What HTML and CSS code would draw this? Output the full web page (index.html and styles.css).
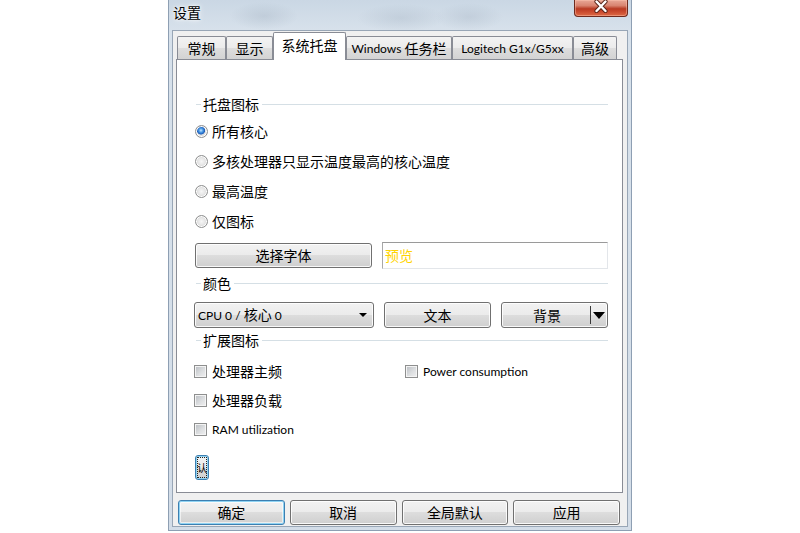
FILE: index.html
```html
<!DOCTYPE html>
<html lang="zh-CN">
<head>
<meta charset="utf-8">
<title>设置</title>
<link rel="stylesheet" href="styles.css">
</head>
<body>
<div class="stage">
  <div class="window">
    <div class="titlebar">
      <span class="title">设置</span>
      <div class="close" aria-label="关闭">
        <svg width="14" height="13" viewBox="0 0 14 13">
          <path d="M2.5 1.5 L11.5 11 M11.5 1.5 L2.5 11" stroke="#5a2418" stroke-width="4.2" stroke-linecap="round" fill="none"/>
          <path d="M2.5 1.5 L11.5 11 M11.5 1.5 L2.5 11" stroke="#ffffff" stroke-width="2.4" stroke-linecap="round" fill="none"/>
        </svg>
      </div>
    </div>
    <div class="client">
      <div class="tabs">
        <div class="tab t1">常规</div>
        <div class="tab t2">显示</div>
        <div class="tab t3 selected">系统托盘</div>
        <div class="tab t4"><span class="en">Windows</span>&nbsp;任务栏</div>
        <div class="tab t5"><span class="en">Logitech G1x/G5xx</span></div>
        <div class="tab t6">高级</div>
      </div>
      <div class="page">
        <div class="group-head"><span>托盘图标</span></div>
        <div class="radios">
          <div class="radio-row"><span class="radio checked"></span>所有核心</div>
          <div class="radio-row"><span class="radio"></span>多核处理器只显示温度最高的核心温度</div>
          <div class="radio-row"><span class="radio"></span>最高温度</div>
          <div class="radio-row"><span class="radio"></span>仅图标</div>
        </div>
        <div class="font-row">
          <div class="btn font-btn">选择字体</div>
          <div class="preview">预览</div>
        </div>
        <div class="group-head color-head"><span>颜色</span></div>
        <div class="color-row">
          <div class="btn combo"><span><span class="en">CPU 0 /</span> 核心 <span class="en">0</span></span><span class="combo-arrow"></span></div>
          <div class="btn text-btn">文本</div>
          <div class="btn split-btn"><span class="split-label">背景</span><span class="split-arrow"></span></div>
        </div>
        <div class="group-head ext-head"><span>扩展图标</span></div>
        <div class="checks">
          <div class="check-row"><span class="check"></span>处理器主频</div>
          <div class="check-row"><span class="check"></span><span class="en">Power consumption</span></div>
          <div class="check-row"><span class="check"></span>处理器负载</div>
          <div></div>
          <div class="check-row"><span class="check"></span><span class="en">RAM utilization</span></div>
        </div>
        <div class="tiny-btn"><span class="tiny-focus">认</span></div>
      </div>
      <div class="buttons">
        <div class="btn default">确定</div>
        <div class="btn">取消</div>
        <div class="btn">全局默认</div>
        <div class="btn">应用</div>
      </div>
    </div>
  </div>
</div>
</body>
</html>
```

FILE: styles.css
```css
* { box-sizing: border-box; }

html, body {
  margin: 0;
  padding: 0;
  background: #ffffff;
}

body {
  font-family: "Noto Sans CJK SC", "Noto Sans", sans-serif;
  font-size: 14px;
  line-height: 17px;
  color: #000;
}

.en {
  font-family: "Lato", "Noto Sans", sans-serif;
  font-size: 12px;
}

.stage {
  width: 800px;
  height: 533px;
  overflow: hidden;
}

.window {
  width: 464px;
  height: 531px;
  margin-left: 168px;
  background:
    radial-gradient(ellipse 34px 14px at 95px 16px, rgba(150,165,182,.28), transparent),
    radial-gradient(ellipse 44px 14px at 232px 18px, rgba(150,165,182,.25), transparent),
    radial-gradient(ellipse 34px 14px at 300px 17px, rgba(150,165,182,.25), transparent),
    linear-gradient(180deg, #cad7e4 0%, #d7e1eb 30px, #d3dde8 100%);
  border: 1px solid #8e9fb3;
  border-top: none;
  padding: 0 3px 3px 3px;
  display: flex;
  flex-direction: column;
}

.titlebar {
  height: 30px;
  display: flex;
  justify-content: space-between;
  align-items: flex-start;
}

.title {
  padding: 4px 0 0 1px;
  font-size: 14px;
  text-shadow: 0 0 6px #ffffff, 0 0 3px #ffffff;
}

.close {
  width: 54px;
  height: 17px;
  border: 1px solid #6e2a1e;
  border-top: none;
  border-radius: 0 0 4px 4px;
  background: linear-gradient(180deg, #e8a796 0%, #d98470 35%, #b83a22 55%, #c8472c 70%, #dd6a45 100%);
  box-shadow: inset 0 0 0 1px rgba(255,200,180,.45);
  display: flex;
  align-items: flex-start;
  justify-content: center;
}

.client {
  flex: 1;
  background: #f0f0f0;
  border: 1px solid #98a6b6;
  padding: 1px 4px 0 3px;
  display: flex;
  flex-direction: column;
}

.tabs {
  height: 27px;
  display: flex;
  align-items: flex-end;
  padding-left: 1px;
}

.tab {
  height: 23px;
  border: 1px solid #898c95;
  border-bottom: none;
  border-radius: 2px 2px 0 0;
  background: linear-gradient(180deg, #f3f3f3 0%, #ebebeb 50%, #dedede 50%, #d3d3d3 100%);
  display: flex;
  align-items: center;
  justify-content: center;
  white-space: nowrap;
}

.t1 { width: 49px; }
.t2 { width: 47px; }
.t3 { width: 73px; }
.t4 { width: 106px; }
.t5 { width: 121px; }
.t6 { width: 44px; }

.tab.selected {
  height: 28px;
  margin-bottom: -1px;
  background: #ffffff;
  position: relative;
  z-index: 1;
  padding-bottom: 2px;
}

.page {
  height: 434px;
  border: 1px solid #898c95;
  background: #ffffff;
  padding: 36px 14px 0 18px;
}

.group-head {
  display: flex;
  align-items: center;
  height: 17px;
  margin-left: 1px;
}

.group-head::before {
  content: "";
  width: 5px;
  height: 1px;
  background: #d5dfe5;
  margin-right: 2px;
}

.group-head::after {
  content: "";
  flex: 1;
  height: 1px;
  background: #d5dfe5;
  margin-left: 3px;
}

.radios {
  margin-top: 3px;
}

.radio-row {
  height: 30px;
  display: flex;
  align-items: center;
  gap: 4px;
}

.radio {
  width: 13px;
  height: 13px;
  border-radius: 50%;
  border: 1px solid #8e8f8f;
  background: radial-gradient(circle, #f6f6f6 0%, #e6e6e6 45%, #cfcfcf 70%, #f4f4f4 100%);
  box-shadow: inset 0 0 0 1px #ffffff;
}

.radio.checked {
  background: radial-gradient(circle at 45% 40%, #c6e6ff 0%, #4b9be6 22%, #1d5cb8 42%, #e2e2e2 50%, #d2d2d2 72%, #f4f4f4 100%);
}

.font-row {
  margin-top: 6px;
  height: 27px;
  display: flex;
  align-items: center;
  gap: 10px;
}

.btn {
  height: 25px;
  border: 1px solid #707070;
  border-radius: 3px;
  background: linear-gradient(180deg, #f2f2f2 0%, #ebebeb 50%, #dddddd 50%, #cfcfcf 100%);
  box-shadow: inset 0 0 0 1px rgba(255,255,255,.85);
  display: flex;
  align-items: center;
  justify-content: center;
  white-space: nowrap;
}

.btn.default {
  border-color: #3c7fb1;
  box-shadow: inset 0 0 0 1px #8fd3f3, inset 0 0 0 2px rgba(255,255,255,.6);
}

.font-btn {
  width: 177px;
}

.preview {
  width: 226px;
  height: 27px;
  border: 1px solid;
  border-color: #9a9a9a #e3e6ea #e3e6ea #a8a8a8;
  background: #ffffff;
  color: #ffd400;
  padding-left: 2px;
  display: flex;
  align-items: center;
}

.color-head {
  margin-top: 6px;
}

.color-row {
  margin-top: 10px;
  height: 26px;
  display: flex;
  align-items: center;
  gap: 10px;
}

.color-row .btn {
  height: 26px;
}

.combo {
  width: 180px;
  margin-left: -1px;
  justify-content: space-between;
  padding: 0 6px 0 3px;
}

.combo-arrow {
  width: 0;
  height: 0;
  border-left: 4px solid transparent;
  border-right: 4px solid transparent;
  border-top: 4px solid #000;
}

.text-btn {
  width: 107px;
}

.split-btn {
  width: 107px;
  justify-content: flex-start;
}

.split-label {
  flex: 1;
  text-align: center;
  padding-left: 2px;
}

.split-arrow {
  width: 17px;
  height: 18px;
  border-left: 1px solid #3a3a3a;
  display: flex;
  align-items: center;
  justify-content: center;
}

.split-arrow::after {
  content: "";
  width: 0;
  height: 0;
  border-left: 6px solid transparent;
  border-right: 6px solid transparent;
  border-top: 7px solid #000;
}

.ext-head {
  margin-top: 4px;
}

.checks {
  margin-top: 8px;
  margin-left: -1px;
  display: grid;
  grid-template-columns: 211px 1fr;
  grid-auto-rows: 29px;
}

.check-row {
  display: flex;
  align-items: center;
  gap: 5px;
}

.check {
  width: 13px;
  height: 13px;
  border: 1px solid #8e8f8f;
  background: linear-gradient(135deg, #b8bcc1 0%, #dcdee0 55%, #f0f0f1 100%);
  box-shadow: inset 0 0 0 1px #f4f4f4;
}

.tiny-btn {
  margin-top: 11px;
  width: 14px;
  height: 25px;
  border: 1px solid #3c7fb1;
  border-radius: 3px;
  background: linear-gradient(180deg, #f2f2f2 0%, #ebebeb 50%, #dddddd 50%, #cfcfcf 100%);
  box-shadow: inset 0 0 0 1px #8fd3f3;
  padding: 1px;
}

.tiny-focus {
  display: flex;
  align-items: center;
  justify-content: center;
  width: 100%;
  height: 100%;
  outline: 1px dotted #222;
  outline-offset: -1px;
  font-size: 10px;
  line-height: 12px;
}

.buttons {
  margin: 7px 3px 0 2px;
  display: grid;
  grid-template-columns: repeat(4, 1fr);
  gap: 5px;
}
```
